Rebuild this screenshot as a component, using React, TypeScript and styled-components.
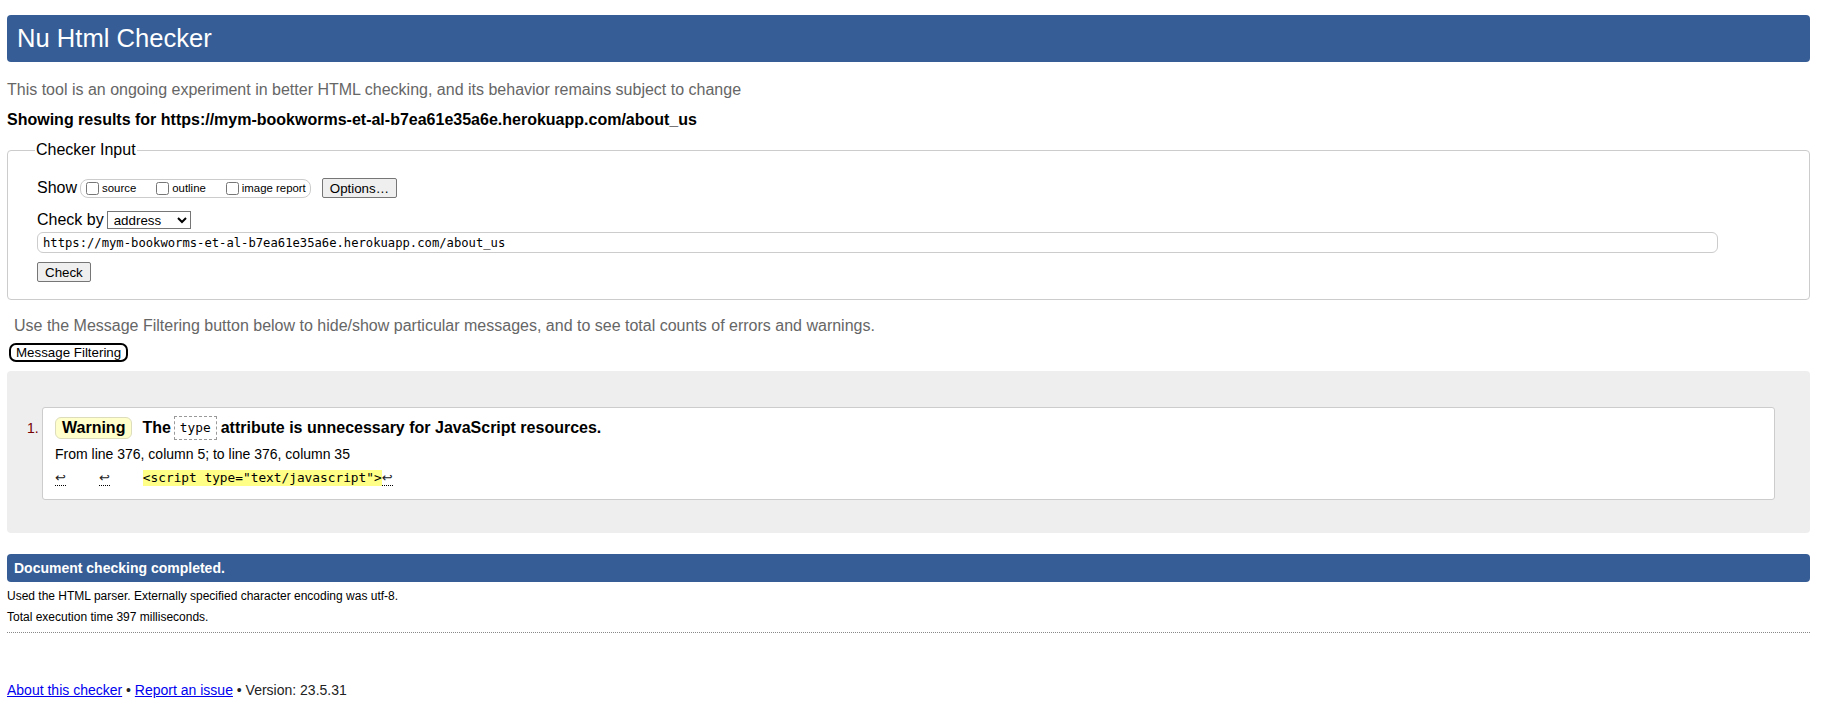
import React from "react";
import styled, { createGlobalStyle } from "styled-components";

const Global = createGlobalStyle`
  html, body { margin: 0; padding: 0; background: #fff; }
  body { font-family: "Liberation Sans", Arial, sans-serif; color: #000; }
`;

const Page = styled.div`
  padding: 0 19px 0 7px;
  display: flex;
  flex-direction: column;
`;

const Header = styled.h1`
  margin: 15px 0 0 0;
  height: 47px;
  line-height: 47px;
  padding: 0 10px;
  background: #365d95;
  color: #fff;
  font-size: 25.6px;
  font-weight: normal;
  border-radius: 4px;
`;

const Intro = styled.p`
  margin: 19px 0 0 0;
  font-size: 16px;
  line-height: 18px;
  color: #666;
`;

const Showing = styled.p`
  margin: 12px 0 0 0;
  font-size: 16px;
  line-height: 18px;
  font-weight: bold;
`;

const Fieldset = styled.fieldset`
  margin: 11px 0 0 0;
  padding: 0 20px 17px 29px;
  border: 1px solid #ccc;
  border-radius: 4px;
  min-width: 0;
`;

const Legend = styled.legend`
  padding: 0 1px;
  margin-left: -2px;
  font-size: 16px;
  line-height: 20px;
`;

const Row = styled.div<{ $mt: number }>`
  display: flex;
  align-items: center;
  margin-top: ${(p) => p.$mt}px;
  font-size: 16px;
`;

const Label = styled.span`
  font-size: 16px;
  margin-right: 3px;
`;

const CheckGroup = styled.div`
  display: flex;
  align-items: center;
  height: 17px;
  padding: 0 4px 0 5px;
  border: 1px solid #ccc;
  border-radius: 8px;
  gap: 20px;
`;

const CheckItem = styled.label`
  display: flex;
  align-items: center;
  font-size: 11.4px;
  color: #000;
`;

const Box = styled.input`
  width: 13px;
  height: 13px;
  margin: 0 3px 0 0;
`;

const NativeButton = styled.button<{ $h?: number }>`
  font-family: "Liberation Sans", Arial, sans-serif;
  font-size: 13.33px;
  height: ${(p) => p.$h ?? 20}px;
  padding: 0 7px;
  background: #efefef;
  border: 1px solid #767676;
  border-radius: 2px;
  color: #000;
`;

const OptionsButton = styled(NativeButton)`
  margin-left: 11px;
  padding: 0 7px;
`;

const Select = styled.select`
  font-family: "Liberation Sans", Arial, sans-serif;
  font-size: 13.33px;
  width: 84px;
  height: 18px;
  padding: 0 0 0 2px;
  border: 1px solid #767676;
  border-radius: 0;
  background: #fff;
  color: #000;
`;

const UrlInput = styled.input`
  display: block;
  box-sizing: border-box;
  width: 1681px;
  height: 21px;
  margin-top: 3px;
  padding: 0 5px;
  font-family: "DejaVu Sans Mono", Consolas, monospace;
  font-size: 12.2px;
  border: 1px solid #ccc;
  border-radius: 6px;
  color: #000;
  outline: none;
`;

const CheckWrap = styled.div`
  margin-top: 9px;
  display: flex;
`;

const FilterNote = styled.p`
  margin: 17px 0 0 7px;
  font-size: 16px;
  line-height: 18px;
  color: #666;
`;

const FilterWrap = styled.div`
  margin: 8px 0 0 2px;
  display: flex;
`;

const FilterButton = styled.button`
  font-family: "Liberation Sans", Arial, sans-serif;
  font-size: 13.33px;
  height: 19px;
  padding: 0 5px;
  background: #fff;
  border: 2px solid #000;
  border-radius: 7px;
  color: #000;
`;

const Results = styled.div`
  margin-top: 9px;
  background: #eee;
  border-radius: 4px;
  padding: 36px 35px 33px 35px;
`;

const List = styled.ol`
  margin: 0;
  padding: 0;
  list-style: none;
`;

const Item = styled.li`
  display: flex;
  position: relative;
  background: #fff;
  border: 1px solid #ccc;
  border-radius: 3px;
  padding: 9px 12px 13px 12px;
  flex-direction: column;
`;

const Marker = styled.span`
  position: absolute;
  left: -16px;
  top: 12px;
  font-size: 14px;
  color: #700;
`;

const MsgHead = styled.p`
  margin: 0;
  display: flex;
  align-items: center;
  font-size: 16px;
  font-weight: bold;
  height: 22px;
`;

const Badge = styled.span`
  display: inline-block;
  background: #ffc;
  border: 1px solid #ddb;
  border-radius: 6px;
  padding: 1px 6px;
  line-height: 18px;
  margin-right: 10px;
`;

const InlineCode = styled.code`
  display: inline-block;
  font-family: "DejaVu Sans Mono", Consolas, monospace;
  font-weight: normal;
  font-size: 12.8px;
  border: 1px dashed #999;
  padding: 2px 5px;
  line-height: 18px;
  margin: 0 4px 0 3px;
`;

const Location = styled.p`
  margin: 7px 0 0 0;
  font-size: 14px;
  line-height: 17px;
`;

const Extract = styled.p`
  margin: 7px 0 0 0;
  display: flex;
  align-items: center;
  font-family: "DejaVu Sans Mono", Consolas, monospace;
  font-size: 12.8px;
  line-height: 16px;
`;

const Lf = styled.span<{ $gap?: number }>`
  display: inline-block;
  border-bottom: 1px dotted #000;
  font-family: "DejaVu Sans", sans-serif;
  font-size: 13px;
  line-height: 15px;
  color: #222;
  margin-right: ${(p) => p.$gap ?? 0}px;
`;

const Mark = styled.mark`
  background: #ff8;
  color: #000;
  padding: 0;
`;

const DoneBar = styled.h2`
  margin: 21px 0 0 0;
  height: 28px;
  line-height: 28px;
  padding: 0 7px;
  background: #365d95;
  color: #fff;
  font-size: 14px;
  font-weight: bold;
  border-radius: 4px;
`;

const Small = styled.p`
  margin: 7px 0 0 0;
  font-size: 12px;
  line-height: 14px;
`;

const Dotted = styled.hr`
  margin: 8px 0 0 0;
  border: 0;
  border-top: 1px dotted #888;
  height: 0;
`;

const Footer = styled.p`
  margin: 49px 0 0 0;
  font-size: 14px;
  line-height: 17px;
  color: #222;
`;

const Link = styled.a`
  color: #00e;
  text-decoration: underline;
`;

export default function App() {
  const url = "https://mym-bookworms-et-al-b7ea61e35a6e.herokuapp.com/about_us";
  return (
    <>
      <Global />
      <Page>
        <Header>Nu Html Checker</Header>
        <Intro>
          This tool is an ongoing experiment in better HTML checking, and its behavior remains subject to change
        </Intro>
        <Showing>Showing results for {url}</Showing>
        <Fieldset>
          <Legend>Checker Input</Legend>
          <Row $mt={18}>
            <Label>Show</Label>
            <CheckGroup>
              <CheckItem>
                <Box type="checkbox" />
                source
              </CheckItem>
              <CheckItem>
                <Box type="checkbox" />
                outline
              </CheckItem>
              <CheckItem>
                <Box type="checkbox" />
                image report
              </CheckItem>
            </CheckGroup>
            <OptionsButton type="button">Options…</OptionsButton>
          </Row>
          <Row $mt={13}>
            <Label>Check by</Label>
            <Select defaultValue="address">
              <option value="address">address</option>
              <option value="file">file upload</option>
              <option value="text">text input</option>
            </Select>
          </Row>
          <UrlInput type="url" defaultValue={url} />
          <CheckWrap>
            <NativeButton type="button">Check</NativeButton>
          </CheckWrap>
        </Fieldset>
        <FilterNote>
          Use the Message Filtering button below to hide/show particular messages, and to see total counts of errors and warnings.
        </FilterNote>
        <FilterWrap>
          <FilterButton type="button">Message Filtering</FilterButton>
        </FilterWrap>
        <Results>
          <List>
            <Item>
              <Marker>1.</Marker>
              <MsgHead>
                <Badge>Warning</Badge>
                The<InlineCode>type</InlineCode>attribute is unnecessary for JavaScript resources.
              </MsgHead>
              <Location>From line 376, column 5; to line 376, column 35</Location>
              <Extract>
                <Lf $gap={33}>↩</Lf>
                <Lf $gap={33}>↩</Lf>
                <Mark>{'<script type="text/javascript">'}</Mark>
                <Lf>↩</Lf>
              </Extract>
            </Item>
          </List>
        </Results>
        <DoneBar>Document checking completed.</DoneBar>
        <Small>Used the HTML parser. Externally specified character encoding was utf-8.</Small>
        <Small>Total execution time 397 milliseconds.</Small>
        <Dotted />
        <Footer>
          <Link href="#">About this checker</Link> • <Link href="#">Report an issue</Link> • Version: 23.5.31
        </Footer>
      </Page>
    </>
  );
}
